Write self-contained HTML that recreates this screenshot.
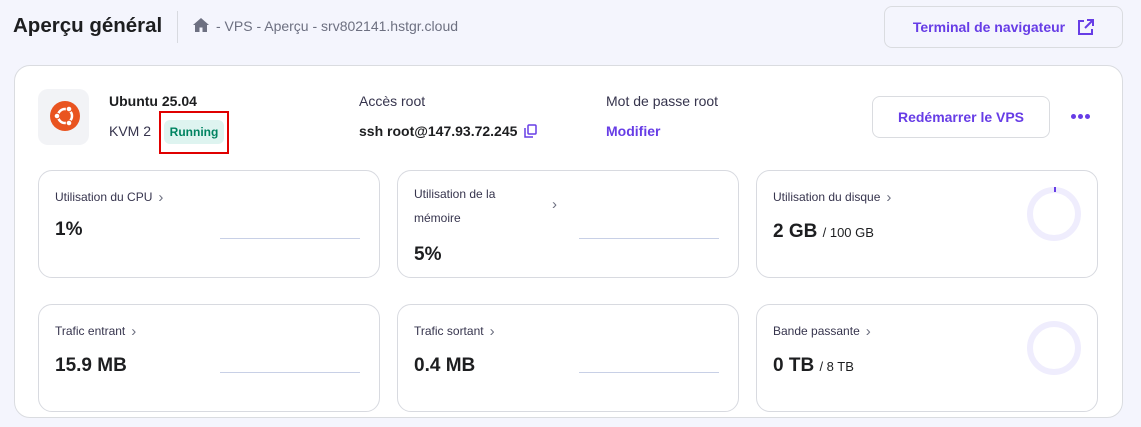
<!DOCTYPE html>
<html><head><meta charset="utf-8"><style>
*{box-sizing:border-box;margin:0;padding:0}
body{width:1141px;height:427px;background:#f4f5fd;font-family:"Liberation Sans",sans-serif;color:#1d1e20;position:relative;overflow:hidden}
.a{position:absolute}
.h1{left:13px;top:14px;font-size:20.5px;font-weight:bold;color:#1d1e20}
.sep{left:177px;top:11px;width:1px;height:32px;background:#d8dae0}
.bc{left:216px;top:18px;font-size:14px;color:#6d7081}
.btn{border:1px solid #dadce0;border-radius:8px;color:#673de6;font-weight:bold;font-size:14px;display:flex;align-items:center;justify-content:center}
.card{left:14px;top:65px;width:1109px;height:353px;background:#fff;border:1px solid #dadce0;border-radius:16px}
.m{position:absolute;width:342px;height:108px;border:1px solid #d8dae0;border-radius:14px;background:#fff}
.m .t{position:absolute;left:16px;top:17px;font-size:12px;color:#36344d}
.m .t b{font-weight:normal;font-size:15px;color:#6d7081;margin-left:6px;position:relative;top:1px}
.m .v{position:absolute;left:16px;top:50px;font-size:19px;font-weight:bold}
.m .v span{font-size:13px;font-weight:normal}
.m .ln{position:absolute;left:181px;top:67px;width:140px;height:1px;background:#c8d0e6}
.ring{position:absolute;right:16px;top:16px;width:54px;height:54px;border:6px solid #efedfd;border-radius:50%}
.dot{position:absolute;width:5px;height:5px;border-radius:50%;background:#673de6;top:114px}
</style></head><body>
<div class="a h1">Aperçu général</div>
<div class="a sep"></div>
<svg class="a" style="left:193px;top:18px" width="16" height="14" viewBox="0 0 16 14"><path d="M8 0L0 7h2v7h4.5V9.5h3V14H14V7h2z" fill="#6d7081"/></svg>
<div class="a bc">- VPS - Aperçu - srv802141.hstgr.cloud</div>
<div class="a btn" style="left:884px;top:6px;width:239px;height:42px">Terminal de navigateur
<svg style="margin-left:12px" width="17" height="17" viewBox="0 0 17 17" fill="none" stroke="#673de6" stroke-width="2"><path d="M7 2H2v13h13v-5M10 1h6v6M16 1L8 9"/></svg></div>
<div class="a card"></div>
<div class="a" style="left:38px;top:89px;width:51px;height:56px;background:#f2f3f6;border-radius:10px"></div>
<svg class="a" style="left:49px;top:100px" width="32" height="32" viewBox="0 0 32 32"><circle cx="16" cy="16" r="15" fill="#e95420"/><circle cx="16" cy="16" r="7" fill="none" stroke="#fff" stroke-width="2.5"/><circle cx="8" cy="16" r="2.8" fill="#fff" stroke="#e95420" stroke-width="1"/><circle cx="20" cy="9" r="2.8" fill="#fff" stroke="#e95420" stroke-width="1"/><circle cx="20" cy="23" r="2.8" fill="#fff" stroke="#e95420" stroke-width="1"/></svg>
<div class="a" style="left:109px;top:93px;font-size:14px;font-weight:bold">Ubuntu 25.04</div>
<div class="a" style="left:109px;top:123px;font-size:14px;color:#36344d">KVM 2</div>
<div class="a" style="left:159px;top:111px;width:70px;height:43px;border:2px solid #e00000"></div>
<div class="a" style="left:164px;top:120px;width:60px;height:24px;background:#def4f0;border-radius:6px;color:#008361;font-size:12px;font-weight:bold;text-align:center;line-height:24px">Running</div>
<div class="a" style="left:359px;top:93px;font-size:14px;color:#36344d">Accès root</div>
<div class="a" style="left:359px;top:123px;font-size:14px;font-weight:bold">ssh root@147.93.72.245</div>
<svg class="a" style="left:524px;top:124px" width="13" height="14" viewBox="0 0 13 14" fill="none" stroke="#673de6" stroke-width="1.5"><rect x="4" y="1" width="8" height="9" rx="1"/><path d="M1 4v9h8"/></svg>
<div class="a" style="left:606px;top:93px;font-size:14px;color:#36344d">Mot de passe root</div>
<div class="a" style="left:606px;top:123px;font-size:14px;font-weight:bold;color:#673de6">Modifier</div>
<div class="a btn" style="left:872px;top:96px;width:178px;height:42px">Redémarrer le VPS</div>
<div class="dot" style="left:1071px"></div><div class="dot" style="left:1078px"></div><div class="dot" style="left:1085px"></div>

<div class="m" style="left:38px;top:170px"><div class="t">Utilisation du CPU<b>›</b></div><div class="v" style="top:48px">1%</div><div class="ln"></div></div>
<div class="m" style="left:397px;top:170px"><div class="t" style="line-height:24px;top:11px">Utilisation de la<br>mémoire</div><div class="t" style="left:148px;top:24px"><b>›</b></div><div class="v" style="top:73px">5%</div><div class="ln"></div></div>
<div class="m" style="left:756px;top:170px"><div class="t">Utilisation du disque<b>›</b></div><div class="v">2 GB <span>/ 100 GB</span></div><div class="ring"></div><div style="position:absolute;left:297px;top:16px;width:2px;height:5px;background:#673de6"></div></div>
<div class="m" style="left:38px;top:304px"><div class="t">Trafic entrant<b>›</b></div><div class="v">15.9 MB</div><div class="ln"></div></div>
<div class="m" style="left:397px;top:304px"><div class="t">Trafic sortant<b>›</b></div><div class="v">0.4 MB</div><div class="ln"></div></div>
<div class="m" style="left:756px;top:304px"><div class="t">Bande passante<b>›</b></div><div class="v">0 TB <span>/ 8 TB</span></div><div class="ring"></div></div>
</body></html>
